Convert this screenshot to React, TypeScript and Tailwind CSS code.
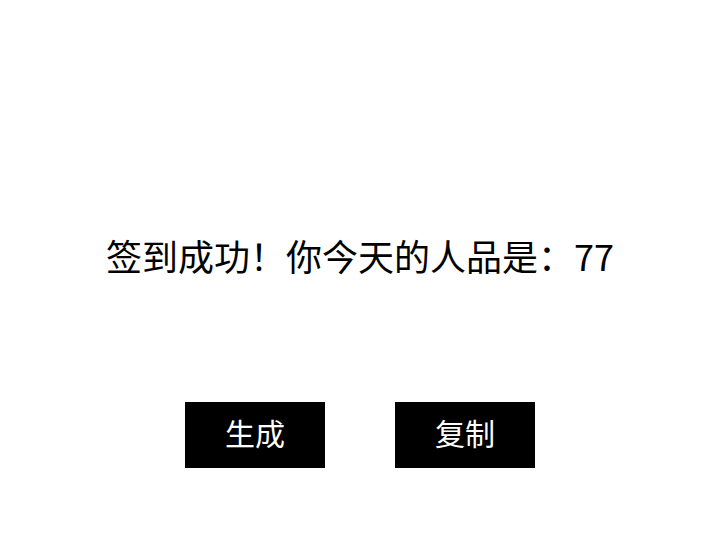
export default function App() {
  return (
    <div
      className="flex h-[540px] w-full flex-col items-center bg-white pt-[237px]"
      style={{ fontFamily: '"Noto Sans CJK SC", "Noto Sans", sans-serif' }}
    >
      <div className="text-[36px] leading-[36px] text-black">签到成功！你今天的人品是：77</div>
      <div className="mt-[129px] flex gap-[70px]">
        <button className="flex h-[66px] w-[140px] items-center justify-center bg-black pb-[6px] text-[30px] text-white">
          生成
        </button>
        <button className="flex h-[66px] w-[140px] items-center justify-center bg-black pb-[6px] text-[30px] text-white">
          复制
        </button>
      </div>
    </div>
  )
}
